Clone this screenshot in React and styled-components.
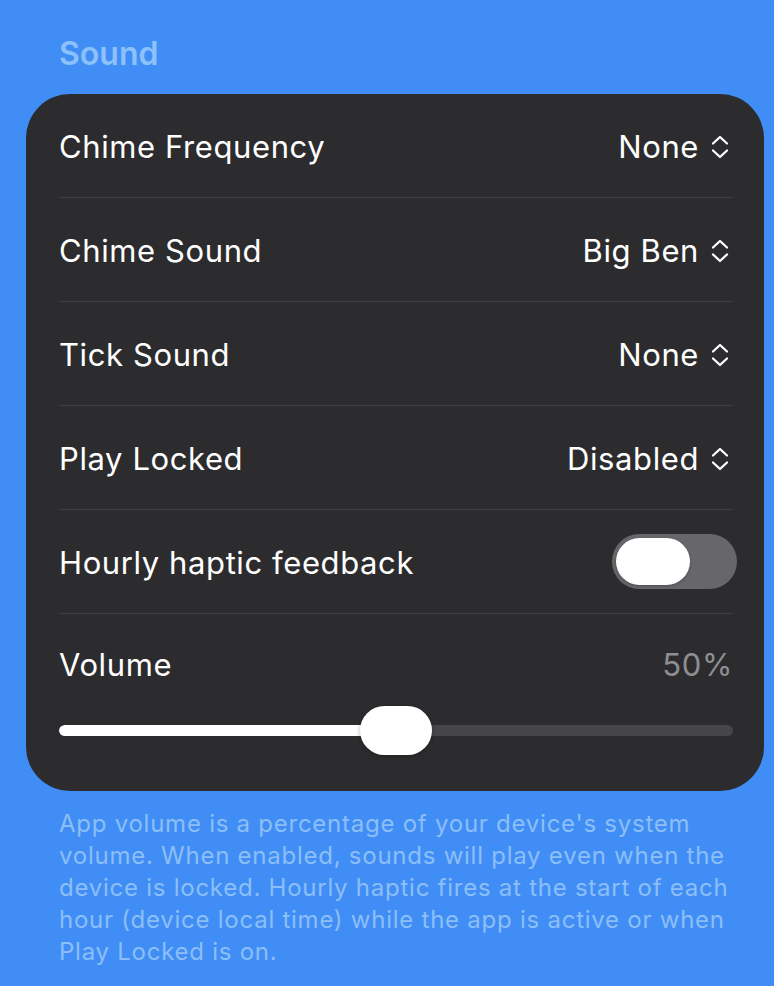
import React from "react";
import styled, { createGlobalStyle } from "styled-components";

const Global = createGlobalStyle`
  html, body {
    margin: 0;
    padding: 0;
    background: #408ef5;
  }
  body {
    font-family: Inter, "Noto Sans", sans-serif;
    -webkit-font-smoothing: antialiased;
  }
`;

const Page = styled.div`
  width: 774px;
  min-height: 986px;
  box-sizing: border-box;
  padding: 0 10px 0 26px;
  background: #408ef5;
`;

const SectionTitle = styled.h2`
  margin: 0;
  padding: 34px 0 0 33px;
  height: 94px;
  box-sizing: border-box;
  font-size: 32px;
  line-height: 40px;
  font-weight: 600;
  color: #8dc1fb;
  letter-spacing: 0px;
`;

const Card = styled.div`
  background: #2c2c2e;
  border-radius: 44px;
  padding: 0 31px 0 33px;
  overflow: hidden;
`;

const Row = styled.div`
  height: 103px;
  display: flex;
  align-items: center;
  justify-content: space-between;
  border-bottom: 1px solid #3e3e41;
`;

const Label = styled.span`
  font-size: 31px;
  line-height: 40px;
  margin-top: 2px;
  color: #ffffff;
  letter-spacing: 0.6px;
`;

const Value = styled.button`
  display: flex;
  align-items: center;
  gap: 11px;
  margin-top: 2px;
  background: none;
  border: none;
  padding: 0;
  font-family: inherit;
  font-size: 31px;
  line-height: 40px;
  color: #ffffff;
  letter-spacing: 0.6px;
  cursor: pointer;
`;

const Toggle = styled.div`
  width: 125px;
  height: 55px;
  margin-right: -4px;
  border-radius: 28px;
  background: #67676b;
  display: flex;
  align-items: center;
  padding: 0 4px;
  box-sizing: border-box;
  justify-content: ${(p) => (p.$on ? "flex-end" : "flex-start")};
`;

const Knob = styled.div`
  width: 74px;
  height: 47px;
  border-radius: 24px;
  background: #ffffff;
  box-shadow: 0 1px 3px rgba(0, 0, 0, 0.25);
`;

const VolumeBlock = styled.div`
  padding: 29px 0 36px;
  display: flex;
  flex-direction: column;
  gap: 21px;
`;

const VolumeHeader = styled.div`
  display: flex;
  justify-content: space-between;
  align-items: center;
`;

const Percent = styled.span`
  font-size: 31px;
  line-height: 40px;
  margin-top: 2px;
  color: #8e8e93;
  letter-spacing: 0.6px;
`;

const Slider = styled.div`
  position: relative;
  height: 49px;
  display: flex;
  align-items: center;
`;

const Track = styled.div`
  flex: 1;
  height: 11px;
  border-radius: 6px;
  background: #464648;
  overflow: hidden;
`;

const Fill = styled.div`
  height: 100%;
  background: #ffffff;
  border-radius: 6px;
`;

const Thumb = styled.div`
  position: absolute;
  top: 0;
  width: 72px;
  height: 49px;
  border-radius: 25px;
  background: #ffffff;
  box-shadow: 0 1px 4px rgba(0, 0, 0, 0.3);
`;

const Footer = styled.p`
  margin: 0;
  padding: 17px 22px 0 33px;
  font-size: 24px;
  line-height: 32px;
  color: #8cbef8;
  letter-spacing: 0.75px;
`;

const Chevrons = () => (
  <svg width="20" height="26" viewBox="0 0 20 26" fill="none" style={{ marginRight: 3 }}>
    <path d="M3 9.5 L10 3 L17 9.5" stroke="#fff" strokeWidth="2.3" strokeLinecap="round" strokeLinejoin="round" />
    <path d="M3 16.5 L10 23 L17 16.5" stroke="#fff" strokeWidth="2.3" strokeLinecap="round" strokeLinejoin="round" />
  </svg>
);

const pickers = [
  { label: "Chime Frequency", value: "None" },
  { label: "Chime Sound", value: "Big Ben" },
  { label: "Tick Sound", value: "None" },
  { label: "Play Locked", value: "Disabled" },
];

export default function App() {
  const volume = 50;
  return (
    <>
      <Global />
      <Page>
        <SectionTitle>Sound</SectionTitle>
        <Card>
          {pickers.map((p) => (
            <Row key={p.label}>
              <Label>{p.label}</Label>
              <Value>
                {p.value}
                <Chevrons />
              </Value>
            </Row>
          ))}
          <Row>
            <Label>Hourly haptic feedback</Label>
            <Toggle $on={false}>
              <Knob />
            </Toggle>
          </Row>
          <VolumeBlock>
            <VolumeHeader>
              <Label>Volume</Label>
              <Percent>{volume}%</Percent>
            </VolumeHeader>
            <Slider>
              <Track>
                <Fill style={{ width: `${volume}%` }} />
              </Track>
              <Thumb style={{ left: `calc(${volume}% - 36px)` }} />
            </Slider>
          </VolumeBlock>
        </Card>
        <Footer>
          App volume is a percentage of your device's system volume. When enabled, sounds will play even when the device is locked. Hourly haptic fires at the start of each hour (device local time) while the app is active or when Play Locked is on.
        </Footer>
      </Page>
    </>
  );
}
